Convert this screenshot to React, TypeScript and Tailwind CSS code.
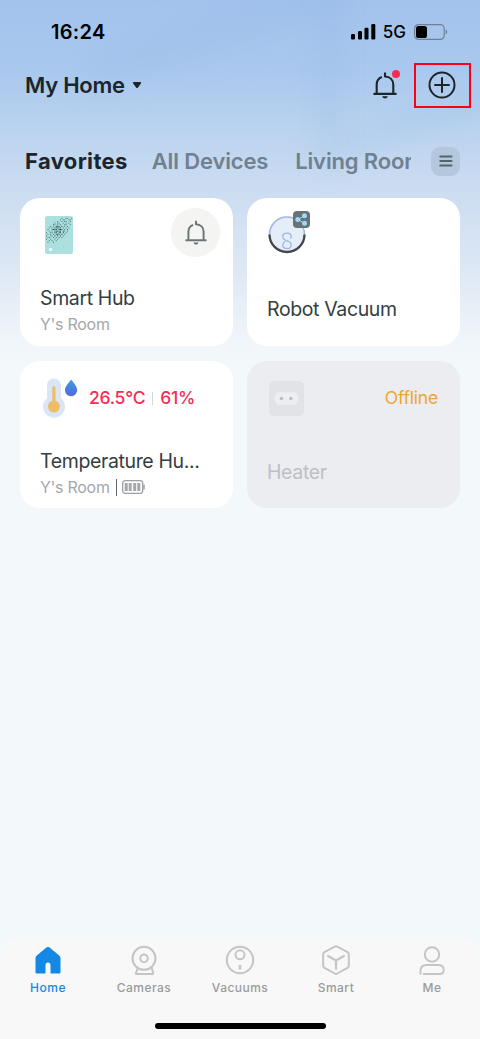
import type { ReactNode } from "react";

type IconProps = { className?: string };

function Bell({ className }: IconProps) {
  return (
    <svg viewBox="0 0 24 27" fill="none" stroke="currentColor" strokeWidth="2.1" className={className}>
      <path d="M3.700 21.500V12.700c0-3.600 1.900-6.400 5.200-7.600" />
      <path d="M12 .6v3.900c4.900.3 8.300 3.600 8.300 8.200v8.800" strokeLinejoin="round" />
      <path d="M1.300 21.900h21.400" strokeLinecap="round" />
      <path d="M9.200 24.300h5.600c-.4 1.400-1.400 2.200-2.800 2.200s-2.400-.8-2.800-2.200Z" fill="currentColor" stroke="none" />
    </svg>
  );
}

function StatusBar() {
  return (
    <div className="flex h-16 items-center justify-between pl-[51px] pr-[32px] text-black">
      <span className="text-[20px] font-semibold tracking-[0.3px]">16:24</span>
      <div className="flex items-center">
        <svg viewBox="0 0 25 16" className="h-4 w-[25px]">
          <rect x="0" y="10" width="4" height="5.5" rx="1.2" />
          <rect x="7" y="7" width="4" height="8.5" rx="1.2" />
          <rect x="13.5" y="3.7" width="4" height="11.8" rx="1.2" />
          <rect x="20.3" y="0" width="4" height="15.5" rx="1.2" />
        </svg>
        <span className="ml-[7px] mt-[2px] text-[17px] font-medium">5G</span>
        <svg viewBox="0 0 34 16" className="ml-[8px] h-4 w-[34px]">
          <rect x="0.6" y="0.6" width="29.6" height="14.8" rx="4" fill="none" stroke="#6f8197" strokeWidth="1.2" />
          <rect x="2" y="2" width="11" height="12" rx="2.6" />
          <path d="M31.7 5.3c1.8.8 1.8 4.6 0 5.4Z" fill="#6f8197" />
        </svg>
      </div>
    </div>
  );
}

function Header() {
  return (
    <div className="flex h-[42px] items-center pl-[25px] pr-[9px] text-[#1c2529]">
      <h1 className="text-[22px] font-semibold tracking-[-0.25px]">My Home</h1>
      <svg viewBox="0 0 10 8" className="ml-[7px] h-2 w-2.5">
        <path d="M2 1h6.200c1 0 1.300.9.700 1.600L6 6.400c-.6.7-1.300.7-1.900 0L1.200 2.600C.6 1.900.9 1 2 1Z" fill="currentColor" />
      </svg>
      <div className="relative ml-auto">
        <Bell className="h-[27px] w-6" />
        <span className="absolute -right-[3px] -top-[2px] size-[8px] rounded-full bg-[#ff2a51]" />
      </div>
      <div className="ml-[17px] flex h-[45px] w-[57px] shrink-0 items-center justify-center border-2 border-[#fb0019]">
        <svg viewBox="0 0 28 28" className="mr-[2px] size-7" fill="none" stroke="currentColor" strokeWidth="2">
          <circle cx="14" cy="14" r="12.5" />
          <path d="M14 6.300v15.400M6.300 14h15.400" />
        </svg>
      </div>
    </div>
  );
}

function Tabs() {
  return (
    <div className="mt-[37px] flex h-9 items-center pl-[25px] pr-5">
      <div className="flex w-[386px] gap-6 overflow-hidden whitespace-nowrap text-[22px] font-semibold tracking-[-0.15px] text-[#71808f]">
        <span className="font-bold tracking-[0.35px] text-[#1c2529]">Favorites</span>
        <span>All Devices</span>
        <span className="ml-[3px]">Living Room</span>
      </div>
      <button aria-label="All rooms" className="ml-auto flex size-[29px] items-center justify-center rounded-[9px] bg-[#b3c8dc]">
        <svg viewBox="0 0 14 12" className="h-3 w-3.5" stroke="#52656d" strokeWidth="1.8" strokeLinecap="round">
          <path d="M1.200 1.500h11.400M1.200 6h11.400M1.200 10.500h11.400" />
        </svg>
      </button>
    </div>
  );
}

// speckle pattern on the front of the hub, one row per string
const speckles = [
  "...........x..xx..x",
  "..........x.xx..xx.",
  "........x..x.xx..x.",
  "......x.xx..x.x.x..",
  ".....xx.x.x..xx..x.",
  "...x.x.xxx.x.x.x...",
  "..x.x.xxxxx.x.x.x..",
  ".x..xxxx.xxx.x.x...",
  "..x.x.xxxxx.xx.x...",
  "x..xx.xx.xx.x.x....",
  ".x.x.x.xxx.x.x.....",
  "x..xx.x.x.x.x......",
  ".xx..x.x.x.x.......",
  "x..x..x.x..........",
  "..x.x..x...........",
  ".x...x.............",
];

function HubIcon() {
  return (
    <svg viewBox="0 0 28 38" className="ml-[5px] h-[38px] w-7">
      <rect width="28" height="38" rx="2.5" fill="#ace0df" />
      {speckles.map((row, y) =>
        row.split("").map((dot, x) => {
          if (dot !== "x") return null;
          const core = Math.hypot(x - 8.5, y - 8) < 4;
          return (
            <rect
              key={`${x}-${y}`}
              x={x * 1.4 + 1}
              y={y * 1.600 + 1.800}
              width="1"
              height="1"
              fill={core ? "#23484d" : "#4c7b7e"}
            />
          );
        }),
      )}
      <path d="M5.600 31.900v3M4.100 33.400h3" stroke="white" strokeWidth="1.600" />
    </svg>
  );
}

function VacuumIcon() {
  return (
    <div className="relative ml-px">
      <svg viewBox="0 0 38 38" className="size-[38px]" fill="none">
        <circle cx="19" cy="18.500" r="17.500" fill="#e5edf9" stroke="#9fb7de" strokeWidth="1.500" />
        <path d="M1.500 18.500a17.500 17.500 0 0 0 35 0" stroke="#45484b" strokeWidth="2.300" />
        <path
          d="M22.500 22.500c.5-.5.700-1.200.7-1.900 0-2.100-1.800-3.400-4.200-3.400s-4.200 1.300-4.200 3.400c0 2.200 1.800 3.600 4.200 4.300s4.200 1.700 4.200 4c0 2.200-1.800 3.600-4.200 3.600s-4.200-1.400-4.200-3.600c0-1.700 1-2.900 2.500-3.600"
          stroke="#9fb7de"
          strokeWidth="1.300"
        />
      </svg>
      <svg viewBox="0 0 17 17" className="absolute -top-[5px] left-[25px] size-[17px]">
        <rect width="17" height="17" rx="4" fill="#687376" />
        <path d="M11.500 4.700 5 8.500l6.500 3.800" fill="none" stroke="#9bd8fa" strokeWidth="1" />
        <circle cx="11.500" cy="4.800" r="2.500" fill="#9bd8fa" />
        <circle cx="4.800" cy="8.500" r="2.500" fill="#9bd8fa" />
        <circle cx="11.500" cy="12.300" r="2.500" fill="#9bd8fa" />
      </svg>
    </div>
  );
}

function ThermometerIcon() {
  return (
    <svg viewBox="0 0 36 40" className="ml-[3px] h-10 w-9">
      <defs>
        <linearGradient id="drop" x1="0" y1="0" x2="0" y2="1">
          <stop stopColor="#3f9ae8" />
          <stop offset="1" stopColor="#5368db" />
        </linearGradient>
      </defs>
      <path d="M4 7.500a7 7 0 0 1 14 0v12.800a11 11 0 1 1-14 0Z" fill="#dae5f5" />
      <path d="M9.300 9.700a1.400 1.400 0 0 1 3.200 0v13a6 6 0 1 1-3.200 0Z" fill="#efbd68" />
      <path d="M28.200 1.500c2.300 3.300 6 7 6 10.600a6.100 6.100 0 0 1-12.300 0c0-3.600 4-7.300 6.300-10.600Z" fill="url(#drop)" />
    </svg>
  );
}

function HeaterIcon() {
  return (
    <svg viewBox="0 0 35 35" className="ml-[2px] size-[35px]">
      <rect width="35" height="35" rx="5.500" fill="#e2e3e7" />
      <path d="M10 11.300h15c1.200 0 2 .4 2.600 1.400l2 3.500c.4.800.4 1.600 0 2.400l-2 3.600c-.6 1-1.400 1.500-2.600 1.500H10c-1.200 0-2-.5-2.600-1.500l-2-3.600c-.4-.8-.4-1.600 0-2.400l2-3.500c.6-1 1.400-1.400 2.600-1.400Z" fill="#edeef1" />
      <circle cx="12.500" cy="17.500" r="1.700" fill="#bbbcc1" />
      <circle cx="21.800" cy="17.500" r="1.700" fill="#bbbcc1" />
    </svg>
  );
}

type CardProps = {
  icon: ReactNode;
  name: string;
  aside?: ReactNode;
  room?: string;
  battery?: boolean;
  offline?: boolean;
};

function DeviceCard({ icon, name, aside, room, battery, offline }: CardProps) {
  return (
    <article
      className={
        offline
          ? "flex flex-col rounded-[20px] bg-[#ebedf1] px-5 text-[#bdbfc4]"
          : "flex flex-col rounded-[20px] bg-white px-5 text-[#343e41]"
      }
    >
      <div className="flex h-[74px] shrink-0 items-center">
        {icon}
        {aside}
      </div>
      <div className={room ? "mt-[13px]" : "mt-[24px]"}>
        <h2 className="text-[19.5px] leading-[26px] tracking-[-0.37px]">{name}</h2>
        {room && (
          <div className="mt-px flex h-[24px] items-center text-[16px] tracking-[-0.28px] text-[#a4a7a9]">
            {room}
            {battery && (
              <>
                <span className="ml-[6px] h-[17px] w-px bg-[#62686b]" />
                <svg viewBox="0 0 23 14" className="ml-[5px] h-[14px] w-[23px]" fill="none">
                  <rect x="0.700" y="0.700" width="20" height="12.600" rx="2.500" stroke="#9da0a2" strokeWidth="1.300" />
                  <path d="M4.200 3v8M8.200 3v8M12.700 3v8M16.800 3v8" stroke="#a4a7a9" strokeWidth="3" />
                  <path d="M22 4.500v5" stroke="#9da0a2" strokeWidth="1.500" />
                </svg>
              </>
            )}
          </div>
        )}
      </div>
    </article>
  );
}

const navItems = [
  {
    label: "Home",
    icon: (
      <path
        d="M14 1c.8 0 1.500.3 2.200.9l8.700 7.300c1.100.9 1.600 1.900 1.600 3.300V26c0 1-.6 1.500-1.500 1.500h-8.500v-8.500c0-1.500-1-2.500-2.500-2.500s-2.500 1-2.500 2.500v8.500H3c-.9 0-1.500-.5-1.500-1.500V12.500c0-1.400.5-2.400 1.600-3.300l8.700-7.300C12.500 1.300 13.200 1 14 1Z"
        fill="currentColor"
        stroke="none"
      />
    ),
  },
  {
    label: "Cameras",
    icon: (
      <>
        <circle cx="14" cy="12.300" r="11.500" />
        <circle cx="14" cy="12.300" r="3.800" />
        <path d="M7.500 22.300c-.3 1.900-.8 3-1.500 4.200M22 22.300c.2 2 .6 3.200 1.200 4.700.2.600 0 1-.6 1H5.800" strokeLinejoin="round" strokeLinecap="round" />
      </>
    ),
  },
  {
    label: "Vacuums",
    icon: (
      <>
        <circle cx="14" cy="14" r="13.200" />
        <circle cx="14" cy="8.800" r="4.500" />
        <path d="M14 20v2.500" strokeWidth="2.600" strokeLinecap="round" />
      </>
    ),
  },
  {
    label: "Smart",
    icon: (
      <>
        <path d="M12.700.6c.8-.5 1.800-.5 2.600 0l10.200 5.600c.9.500 1.300 1.200 1.300 2.100v11.400c0 .9-.4 1.600-1.300 2.100l-10.200 5.700c-.8.500-1.800.5-2.600 0L2.500 21.800c-.9-.5-1.300-1.200-1.300-2.100V8.300c0-.9.400-1.600 1.300-2.100Z" />
        <path d="m6 10 8 4.500 8-4.500M14 14.500v8.300" strokeWidth="2.200" strokeLinecap="round" />
      </>
    ),
  },
  {
    label: "Me",
    icon: (
      <>
        <circle cx="14" cy="8.500" r="7.200" />
        <path d="M2.500 28.500v-3.500c0-4 2-6 6-6h11.500c3.500 0 5.700 1.500 5.700 4.500 0 3.200-1.700 4.500-4 4.500H5" />
      </>
    ),
  },
];

function BottomNav() {
  return (
    <nav className="flex h-[101px] flex-col rounded-t-[20px] bg-[#f8f8f8]">
      <div className="flex h-[85px] pt-[8px]">
        {navItems.map((item, i) => (
          <a
            key={item.label}
            className={i === 0 ? "flex flex-1 flex-col items-center text-[#1389e5]" : "flex flex-1 flex-col items-center text-[#c4c5c6]"}
          >
            <svg viewBox="0 0 28 29" className="mr-px h-[29px] w-7 overflow-visible" fill="none" stroke="currentColor" strokeWidth="2">
              {item.icon}
            </svg>
            <span
              className={
                i === 0
                  ? "mt-[5px] text-[12px] font-medium leading-4 tracking-[0.5px]"
                  : "mt-[5px] text-[12px] font-medium leading-4 tracking-[0.45px] text-[#999b9d]"
              }
            >
              {item.label}
            </span>
          </a>
        ))}
      </div>
      <div className="mx-auto h-[6px] w-[171px] rounded-full bg-black" />
    </nav>
  );
}

export default function App() {
  return (
    <main className="relative isolate flex h-[1039px] w-[480px] flex-col overflow-hidden bg-[#f3f8fb] font-['Inter',sans-serif]">
      <div className="absolute inset-x-0 top-0 -z-10 h-[370px] overflow-hidden bg-[linear-gradient(#a3c3ed_0px,#a9c8ee_70px,#b9d2ef_125px,#cadcf1_185px,#dce7f4_265px,#f1f6fa_345px,#f3f8fb_370px)]">
        <div className="absolute left-[80px] top-[15px] h-[30px] w-[280px] -rotate-[18deg] bg-[#86ade0]/20 blur-lg" />
        <div className="absolute left-[318px] top-0 h-[170px] w-[22px] bg-[#7ea8dc]/15 blur-md" />
        <div className="absolute left-[340px] top-[108px] h-[20px] w-[180px] -rotate-[18deg] bg-[#8db4e2]/20 blur-md" />
      </div>
      <StatusBar />
      <Header />
      <Tabs />
      <section className="mt-[19px] grid grid-cols-2 grid-rows-[148px_147px] gap-x-[14px] gap-y-[15px] px-5">
        <DeviceCard
          icon={<HubIcon />}
          name="Smart Hub"
          room="Y's Room"
          aside={
            <button aria-label="Alerts" className="-mr-[7px] ml-auto mb-[5px] flex size-[49px] items-center justify-center rounded-full bg-[#f4f4f3] text-[#6c7375]">
              <Bell className="h-[25px] w-[22px]" />
            </button>
          }
        />
        <DeviceCard icon={<VacuumIcon />} name="Robot Vacuum" />
        <DeviceCard
          icon={<ThermometerIcon />}
          name="Temperature Hu..."
          room="Y's Room"
          battery
          aside={
            <div className="ml-[10px] flex items-center text-[17.5px] font-medium tracking-[-0.25px] text-[#f62c56]">
              26.5°C
              <span className="mx-[7px] h-[13px] w-px bg-[#d2d4d5]" />
              61%
            </div>
          }
        />
        <DeviceCard icon={<HeaterIcon />} name="Heater" offline aside={<span className="ml-auto mr-[2px] text-[17.5px] tracking-[-0.2px] text-[#f2a52e]">Offline</span>} />
      </section>
      <div className="mt-auto">
        <BottomNav />
      </div>
    </main>
  );
}
